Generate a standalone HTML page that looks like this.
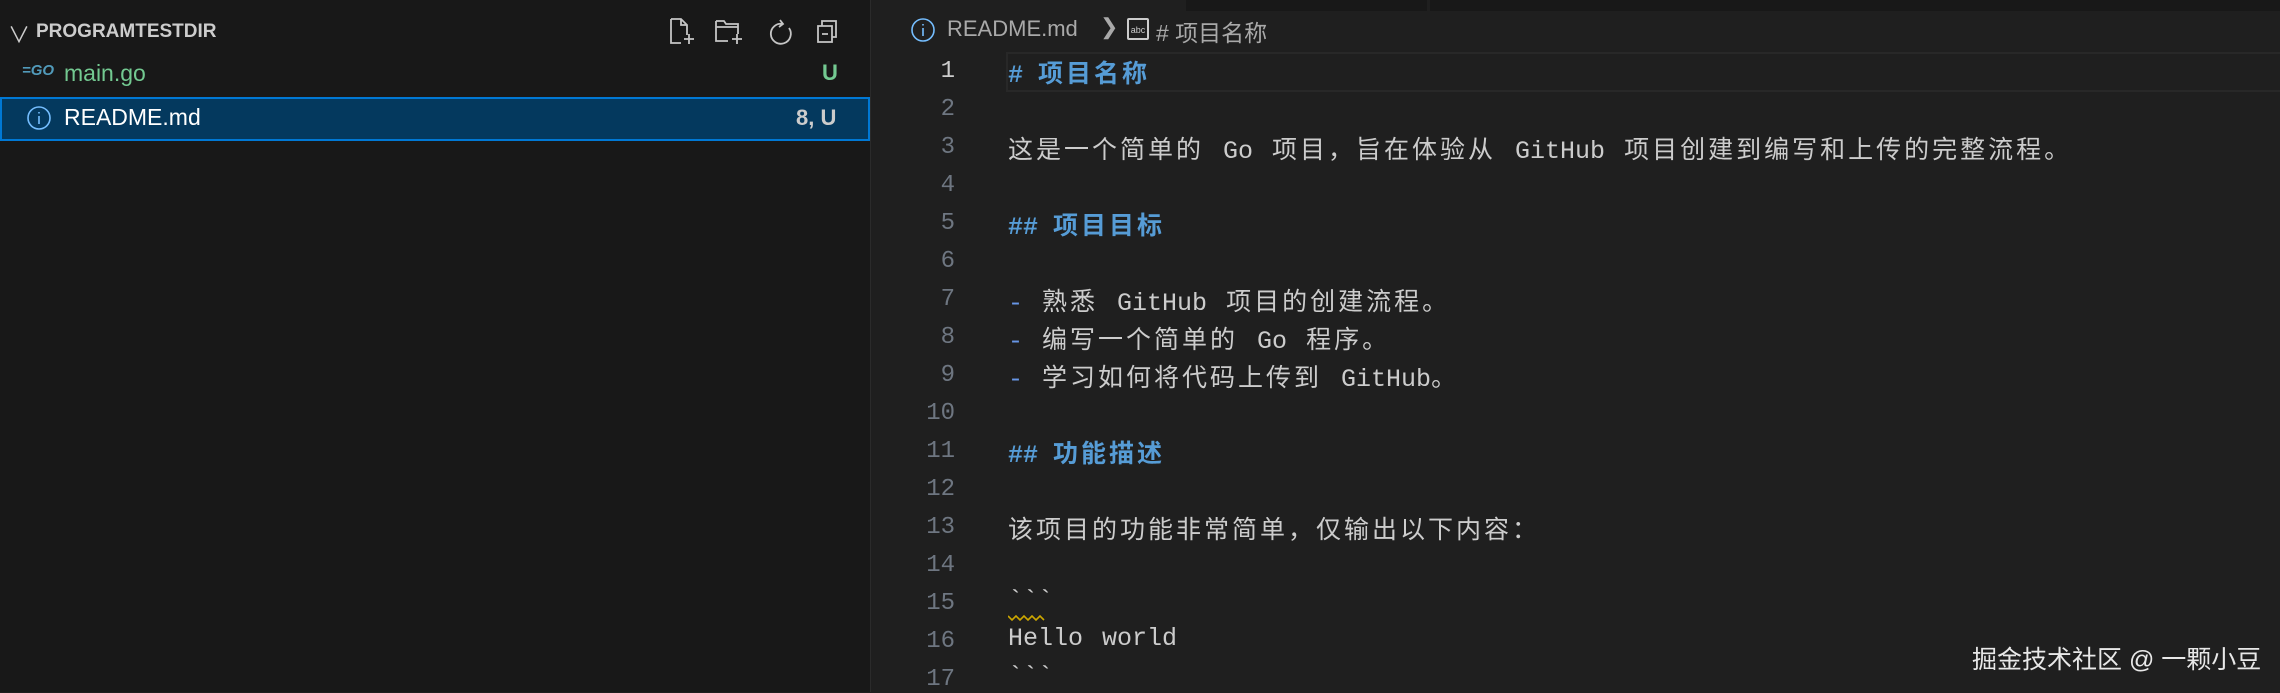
<!DOCTYPE html>
<html><head><meta charset="utf-8"><style>
body{margin:0;width:2280px;height:692px;background:#1f1f1f;overflow:hidden;position:relative;font-family:"Liberation Sans","Noto Sans CJK SC",sans-serif}
#side{position:absolute;left:0;top:0;width:870px;height:692px;background:#181818;border-right:1px solid #2b2b2b}
.t{position:absolute;white-space:nowrap}
.ln{position:absolute;width:100px;left:855px;text-align:right;font-family:"Liberation Mono",monospace;font-size:24px;color:#6e7681}
.cd{position:absolute;left:1008px;font-family:"Liberation Mono","Noto Sans CJK SC",monospace;font-size:25px;color:#cccccc;white-space:pre;word-spacing:4px}
.c{letter-spacing:3px}
.h{color:#569cd6;font-weight:bold;word-spacing:0}
.d{color:#6796e6}
</style></head><body>
<div id="side">
 <div class="t" style="left:8px;top:18px;color:#ccc;font-size:22px">&#x2228;</div>
 <div class="t" style="left:36px;top:21px;color:#ccc;font-size:19px;font-weight:bold">PROGRAMTESTDIR</div>
 <svg style="position:absolute;left:668px;top:16px" width="175" height="32" fill="none" stroke="#c5c5c5" stroke-width="1.8">
  <path d="M3 3h10l6 6v10M3 3v24h10M13 3v6h6M16 23h10M21 18v10"/>
  <path d="M48 5h8l2 3h12v10M48 5v20h12M48 11h22M64 23h10M69 18v10"/>
  <path d="M115 8a10 10 0 1 0 6 4M112 4l3 4-4 3"/>
  <path d="M150 10h14v16h-14zM154 10v-5h14v16h-4M154 18h6"/>
 </svg>
 <div class="t" style="left:22px;top:62px;color:#519aba;font-size:15px;font-weight:bold;font-style:italic">=GO</div>
 <div class="t" style="left:64px;top:60px;color:#73c991;font-size:23px">main.go</div>
 <div class="t" style="left:822px;top:60px;color:#73c991;font-size:22px;font-weight:bold">U</div>
 <div style="position:absolute;left:0;top:97px;width:866px;height:40px;background:#04395e;border:2px solid #0078d4"></div>
 <svg style="position:absolute;left:26px;top:105px" width="26" height="26" fill="none" stroke="#75beff" stroke-width="1.6"><circle cx="13" cy="13" r="11"/><path d="M13 11v8M13 7v1.5"/></svg>
 <div class="t" style="left:64px;top:104px;color:#fff;font-size:23px">README.md</div>
 <div class="t" style="left:796px;top:105px;color:#ccc;font-size:22px;font-weight:bold">8, U</div>
</div>
<div style="position:absolute;left:1186px;top:0;width:241px;height:11px;background:#181818"></div>
<div style="position:absolute;left:1430px;top:0;width:850px;height:11px;background:#181818"></div>
<svg style="position:absolute;left:910px;top:17px" width="26" height="26" fill="none" stroke="#75beff" stroke-width="1.6"><circle cx="13" cy="13" r="11"/><path d="M13 11v8M13 7v1.5"/></svg>
<div class="t" style="left:947px;top:16px;color:#a9a9a9;font-size:22px">README.md</div>
<div class="t" style="left:1100px;top:14px;color:#a9a9a9;font-size:22px">&#x276F;</div>
<div style="position:absolute;left:1127px;top:18px;width:22px;height:22px;border:2px solid #ccc;border-radius:2px;color:#ccc;font-size:9px;text-align:center;line-height:20px;box-sizing:border-box">abc</div>
<div class="t" style="left:1156px;top:14px;color:#a9a9a9;font-size:23px">#&nbsp;项目名称</div>
<div style="position:absolute;left:1006px;top:52px;width:1274px;height:36px;border:2px solid #282828"></div>
<div class="ln" style="top:58px;color:#cccccc">1</div>
<div class="ln" style="top:96px">2</div>
<div class="ln" style="top:134px">3</div>
<div class="ln" style="top:172px">4</div>
<div class="ln" style="top:210px">5</div>
<div class="ln" style="top:248px">6</div>
<div class="ln" style="top:286px">7</div>
<div class="ln" style="top:324px">8</div>
<div class="ln" style="top:362px">9</div>
<div class="ln" style="top:400px">10</div>
<div class="ln" style="top:438px">11</div>
<div class="ln" style="top:476px">12</div>
<div class="ln" style="top:514px">13</div>
<div class="ln" style="top:552px">14</div>
<div class="ln" style="top:590px">15</div>
<div class="ln" style="top:628px">16</div>
<div class="ln" style="top:666px">17</div>
<div class="cd h" style="top:54px"># <span class="c">项目名称</span></div>
<div class="cd" style="top:130px"><span class="c">这是一个简单的</span> Go <span class="c">项目，旨在体验从</span> GitHub <span class="c">项目创建到编写和上传的完整流程。</span></div>
<div class="cd h" style="top:206px">## <span class="c">项目目标</span></div>
<div class="cd" style="top:282px"><span class="d">-</span> <span class="c">熟悉</span> GitHub <span class="c">项目的创建流程。</span></div>
<div class="cd" style="top:320px"><span class="d">-</span> <span class="c">编写一个简单的</span> Go <span class="c">程序。</span></div>
<div class="cd" style="top:358px"><span class="d">-</span> <span class="c">学习如何将代码上传到</span> GitHub<span class="c">。</span></div>
<div class="cd h" style="top:434px">## <span class="c">功能描述</span></div>
<div class="cd" style="top:510px"><span class="c">该项目的功能非常简单，仅输出以下内容：</span></div>
<div class="cd" style="top:586px">&#96;&#96;&#96;</div>
<svg style="position:absolute;left:1008px;top:614px" width="40" height="8" fill="none" stroke="#cca700" stroke-width="1.6"><path d="M0 2l4 4 4-4 4 4 4-4 4 4 4-4 4 4 4-4 4 4"/></svg>
<div class="cd" style="top:624px">Hello world</div>
<div class="cd" style="top:662px">&#96;&#96;&#96;</div>
<div class="t" style="left:1972px;top:640px;color:#e8e8e8;font-size:25px">掘金技术社区 @ 一颗小豆</div>
</body></html>
